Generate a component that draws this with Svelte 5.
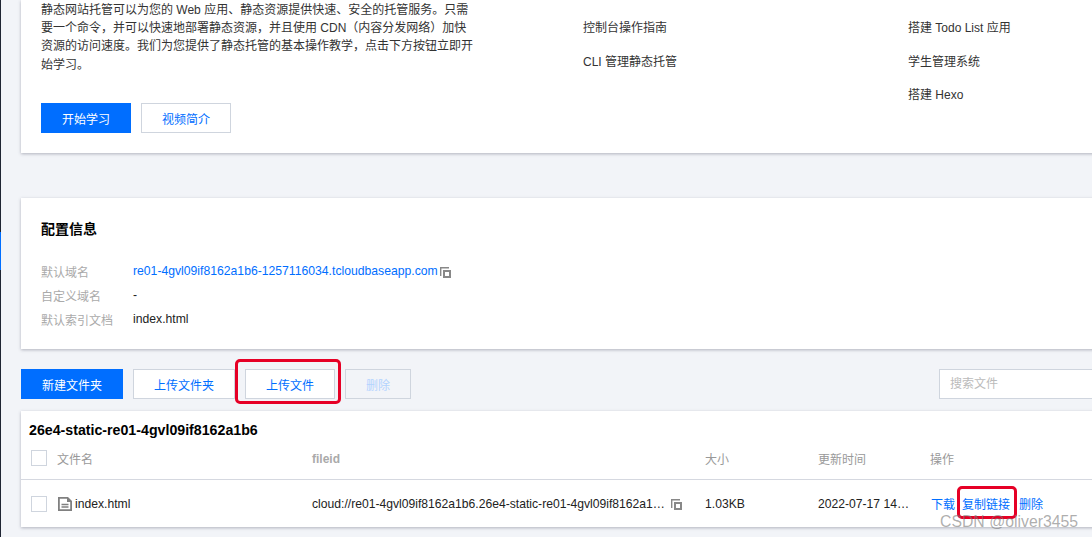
<script>
	const guides = ['控制台操作指南', 'CLI 管理静态托管'];
	const projects = ['搭建 Todo List 应用', '学生管理系统', '搭建 Hexo'];
	const config = [
		{ label: '默认域名', value: 're01-4gvl09if8162a1b6-1257116034.tcloudbaseapp.com', link: true },
		{ label: '自定义域名', value: '-' },
		{ label: '默认索引文档', value: 'index.html' }
	];
</script>

{#snippet copyIcon()}
	<svg class="copy" width="11" height="11" viewBox="0 0 11 11" aria-hidden="true">
		<path d="M0 0h9v1.4H1.4V9H0z" fill="#888" />
		<path fill-rule="evenodd" d="M3 3h8v8H3zM5 5v4h4V5z" fill="#888" />
	</svg>
{/snippet}

<div class="page">
	<nav class="rail"><span class="rail-active"></span></nav>
	<main class="content">
		<section class="card intro">
			<div class="intro-text">
				<p>静态网站托管可以为您的 Web 应用、静态资源提供快速、安全的托管服务。只需要一个命令，并可以快速地部署静态资源，并且使用 CDN（内容分发网络）加快资源的访问速度。我们为您提供了静态托管的基本操作教学，点击下方按钮立即开始学习。</p>
				<div class="intro-actions">
					<button class="btn primary start">开始学习</button>
					<button class="btn start">视频简介</button>
				</div>
			</div>
			<ul class="links guides">
				{#each guides as item}<li>{item}</li>{/each}
			</ul>
			<ul class="links projects">
				{#each projects as item}<li>{item}</li>{/each}
			</ul>
		</section>

		<section class="card config">
			<header class="config-head">
				<h2>配置信息</h2>
				<a href="#detail">详细</a>
			</header>
			<dl>
				{#each config as row}
					<dt>{row.label}</dt>
					<dd class:link={row.link}>
						{row.value}{#if row.link}{@render copyIcon()}{/if}
					</dd>
				{/each}
			</dl>
		</section>

		<div class="toolbar">
			<button class="btn primary new-folder">新建文件夹</button>
			<button class="btn upload-folder">上传文件夹</button>
			<button class="btn upload-file marked">上传文件</button>
			<button class="btn remove">删除</button>
			<input class="search" placeholder="搜索文件" />
		</div>

		<section class="card files">
			<h3>26e4-static-re01-4gvl09if8162a1b6</h3>
			<div class="row head">
				<span class="check"></span>
				<span>文件名</span>
				<span class="strong">fileid</span>
				<span>大小</span>
				<span>更新时间</span>
				<span>操作</span>
			</div>
			<div class="row body">
				<span class="check"></span>
				<span class="name">
					<svg width="14" height="14" viewBox="0 0 14 14" aria-hidden="true">
						<path fill-rule="evenodd" d="M0 0h10l4 4v10H0zM1.8 1.8v10.4h10.4V5H9V1.8zM3.5 6.8h7v1.4h-7zM3.5 9.3h7v1.4h-7z" fill="#808080" />
					</svg>
					index.html
				</span>
				<span class="fileid">
					<span class="truncated">cloud://re01-4gvl09if8162a1b6.26e4-static-re01-4gvl09if8162a1…</span>
					{@render copyIcon()}
				</span>
				<span class="value">1.03KB</span>
				<span class="value">2022-07-17 14…</span>
				<span class="ops">
					<a href="#download">下载</a>
					<a href="#copy" class="marked">复制链接</a>
					<a href="#delete">删除</a>
				</span>
			</div>
		</section>
	</main>
	<div class="watermark">CSDN @oliver3455</div>
</div>

<style>
	:global(body) {
		margin: 0;
		background: #f2f4f8;
	}

	.page {
		position: relative;
		display: flex;
		width: 1092px;
		height: 537px;
		overflow: hidden;
		font-family: 'Liberation Sans', 'Noto Sans CJK SC', sans-serif;
		font-size: 12px;
		color: #222;
		background: #f2f4f8;
	}

	.rail {
		flex: none;
		width: 1px;
		height: 100%;
		background: #1f2533;
		padding-top: 232px;
		box-sizing: border-box;
	}

	.rail-active {
		display: block;
		height: 38px;
		background: #006eff;
	}

	.content {
		flex: none;
		width: 1130px;
		margin-left: 20px;
	}

	.card {
		background: #fff;
		box-shadow: 0 1px 3px rgba(54, 58, 80, 0.35);
	}

	.intro {
		display: grid;
		grid-template-columns: 542px 325px 1fr;
		height: 153px;
		box-sizing: border-box;
		padding: 1px 0 0 20px;
	}

	.intro-text p {
		width: 434px;
		margin: 0;
		line-height: 18.2px;
		color: #333;
	}

	.intro-actions {
		display: flex;
		gap: 10px;
		margin-top: 29.2px;
	}

	.links {
		list-style: none;
		margin: 0;
		padding: 19px 0 0;
		display: flex;
		flex-direction: column;
		gap: 17.2px;
		line-height: 16.5px;
		color: #333;
	}

	.btn {
		box-sizing: border-box;
		height: 30px;
		padding: 0;
		font: inherit;
		color: #006eff;
		background: #fff;
		border: 1px solid #cfd5de;
	}

	.btn.primary {
		color: #fff;
		background: #006eff;
		border-color: #006eff;
	}

	.start {
		width: 90px;
	}

	.config {
		height: 151px;
		box-sizing: border-box;
		margin-top: 45px;
		padding: 20px 20px 0;
	}

	.config-head {
		display: flex;
		justify-content: space-between;
		align-items: center;
		height: 20px;
	}

	.config-head h2 {
		margin: 0;
		font-size: 14px;
		font-weight: 700;
		color: #000;
	}

	a {
		color: #006eff;
		text-decoration: none;
	}

	.config-head a {
		margin-right: 13px;
	}

	dl {
		display: grid;
		grid-template-columns: 92px 1fr;
		grid-auto-rows: 24px;
		align-items: center;
		margin: 21px 0 0;
	}

	dt {
		color: #aaa;
	}

	dd {
		margin: 0;
		display: flex;
		align-items: center;
		font-size: 12.2px;
	}

	dd.link {
		color: #006eff;
	}

	.copy {
		flex: none;
		margin: 2px 0 0 2px;
	}

	.toolbar {
		display: flex;
		gap: 10px;
		margin-top: 20px;
		height: 30px;
	}

	.toolbar .new-folder {
		width: 102px;
	}

	.toolbar .upload-folder {
		width: 102px;
	}

	.toolbar .upload-file {
		width: 90px;
	}

	.toolbar .remove {
		width: 66px;
		color: #b2d3ff;
		background: #f2f4f8;
	}

	.search {
		box-sizing: border-box;
		width: 190px;
		height: 30px;
		margin-left: 518px;
		padding: 0 10px;
		font: inherit;
		background: #fff;
		border: 1px solid #cfd5de;
		border-radius: 0;
		outline: none;
	}

	.search::placeholder {
		color: #bbb;
	}

	.marked {
		position: relative;
	}

	.marked::after {
		content: '';
		position: absolute;
		border: 3px solid #e60026;
		border-radius: 5px;
		pointer-events: none;
	}

	.upload-file.marked::after {
		inset: -11px -7px -6px -11px;
	}

	.ops .marked::after {
		inset: -9px -7px -7px -5px;
	}

	.files {
		margin-top: 12px;
		height: 116px;
	}

	.files h3 {
		margin: 0;
		padding: 11px 0 0 8px;
		height: 26px;
		box-sizing: border-box;
		line-height: 16px;
		font-size: 14.2px;
		font-weight: 700;
		color: #000;
	}

	.row {
		display: grid;
		grid-template-columns: 26px 255px 393px 113px 112px 1fr;
		align-items: center;
		padding-left: 10px;
	}

	.row.head {
		height: 43px;
		box-sizing: border-box;
		padding-top: 1.5px;
		color: #999;
		border-bottom: 1px solid #d5d8e0;
	}

	.row.head .check {
		margin-top: -1.5px;
	}

	.strong {
		font-weight: 700;
		color: #aaa;
	}

	.row.body {
		height: 47px;
	}

	.value,
	.name,
	.fileid {
		font-size: 12.15px;
	}

	.check {
		box-sizing: border-box;
		width: 16px;
		height: 16px;
		background: #fff;
		border: 1px solid #cfd5de;
	}

	.name {
		display: flex;
		align-items: center;
		gap: 3px;
		margin-left: 1px;
	}

	.fileid {
		display: flex;
		align-items: center;
		width: 371px;
	}

	.truncated {
		width: 355px;
		white-space: nowrap;
	}

	.fileid .copy {
		margin-left: 4px;
	}

	.ops {
		display: flex;
		gap: 7px;
		margin-left: 1px;
		white-space: nowrap;
	}

	.ops .marked {
		margin-right: 2px;
	}

	.watermark {
		position: absolute;
		left: 940px;
		top: 512px;
		font-size: 15.8px;
		line-height: 20px;
		color: rgba(120, 120, 120, 0.6);
	}
</style>
